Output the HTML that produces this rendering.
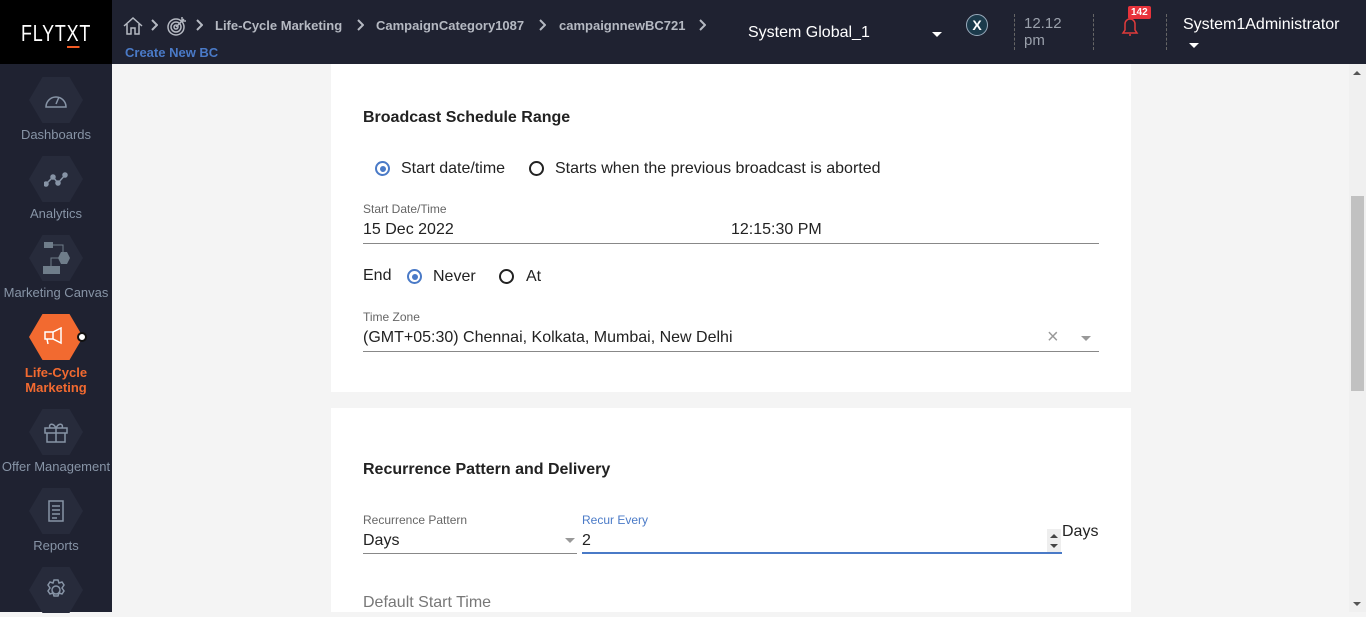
<!DOCTYPE html>
<html><head><meta charset="utf-8"><style>
*{box-sizing:border-box;margin:0;padding:0}
body{width:1366px;height:612px;overflow:hidden;background:#f4f4f4;font-family:"Liberation Sans",sans-serif;position:relative}
.hdr{position:absolute;left:0;top:0;width:1366px;height:64px;background:#1f2231}
.logo{position:absolute;left:0;top:0;width:112px;height:64px;background:#000}
.logo span.w{position:absolute;left:21px;top:20px;color:#fff;font-size:23px;transform:scaleX(0.78);transform-origin:left top;letter-spacing:1px}
.side{position:absolute;left:0;top:64px;width:112px;height:548px;background:#1f2231}
.nav{position:absolute;left:0;width:112px;text-align:center;font-size:13px;color:#8794a6}
.hex{width:54px;height:46px;margin:0 auto 4px;background:#272b3b;clip-path:polygon(25% 0,75% 0,100% 50%,75% 100%,25% 100%,0 50%);display:flex;align-items:center;justify-content:center}
.t{position:absolute;color:#fff;font-size:16px}
.bc{position:absolute;top:18px;color:#b5b9c2;font-size:13px;font-weight:bold;white-space:nowrap}
.chev{position:absolute;top:19px}
.card{position:absolute;left:331px;width:800px;background:#fff}
.h{position:absolute;left:32px;font-size:16px;font-weight:bold;color:#222}
.lbl{position:absolute;font-size:12px;color:#666}
.val{position:absolute;font-size:16px;color:#222}
.line{position:absolute;height:1px;background:#888}
.rad{position:absolute;width:15px;height:15px;border:2px solid #222;border-radius:50%}
.rad.on{border-color:#4a7ac7}
.rad.on:after{content:"";position:absolute;left:2.5px;top:2.5px;width:6px;height:6px;border-radius:50%;background:#4a7ac7}
</style></head><body>
<div class="hdr">
<div class="logo"><span class="w">FLYT<span style="border-bottom:2px solid #f15a24">X</span>T</span></div>
<svg style="position:absolute;left:122px;top:16px" width="22" height="20" viewBox="0 0 22 20" fill="none" stroke="#b5b9c2" stroke-width="1.5"><path d="M2 10L11 2l9 8M5 8v10h4v-6h4v6h4V8"/></svg>
<svg class="chev" style="left:150px" width="8" height="12" viewBox="0 0 8 12" fill="none" stroke="#b5b9c2" stroke-width="2"><path d="M2 1l5 5-5 5"/></svg>
<svg style="position:absolute;left:166px;top:15px" width="22" height="22" viewBox="0 0 22 22" fill="none" stroke="#b5b9c2" stroke-width="1.5"><circle cx="10" cy="12" r="8"/><circle cx="10" cy="12" r="5"/><circle cx="10" cy="12" r="2"/><path d="M10 12l8-8M16 2v4h4"/></svg>
<svg class="chev" style="left:195px" width="8" height="12" viewBox="0 0 8 12" fill="none" stroke="#b5b9c2" stroke-width="2"><path d="M2 1l5 5-5 5"/></svg>
<div class="bc" style="left:215px">Life-Cycle Marketing</div>
<svg class="chev" style="left:356px" width="8" height="12" viewBox="0 0 8 12" fill="none" stroke="#b5b9c2" stroke-width="2"><path d="M2 1l5 5-5 5"/></svg>
<div class="bc" style="left:376px">CampaignCategory1087</div>
<svg class="chev" style="left:538px" width="8" height="12" viewBox="0 0 8 12" fill="none" stroke="#b5b9c2" stroke-width="2"><path d="M2 1l5 5-5 5"/></svg>
<div class="bc" style="left:559px">campaignnewBC721</div>
<svg class="chev" style="left:698px" width="8" height="12" viewBox="0 0 8 12" fill="none" stroke="#b5b9c2" stroke-width="2"><path d="M2 1l5 5-5 5"/></svg>
<div style="position:absolute;left:125px;top:45px;color:#4a7ac7;font-size:13px;font-weight:bold">Create New BC</div>
<div class="t" style="left:748px;top:24px">System Global_1</div>
<div style="position:absolute;left:932px;top:32px;border:5px solid transparent;border-top-color:#fff"></div>
<div style="position:absolute;left:966px;top:14px;width:22px;height:22px;border-radius:50%;background:#1b3a4b;border:1px solid #9ab;color:#fff;font-weight:bold;font-size:14px;text-align:center;line-height:20px">X</div>
<div style="position:absolute;left:1014px;top:14px;height:36px;border-left:1px dashed #666"></div>
<div style="position:absolute;left:1024px;top:15px;color:#9aa0ab;font-size:15px;line-height:17px">12.12<br>pm</div>
<div style="position:absolute;left:1093px;top:14px;height:36px;border-left:1px dashed #666"></div>
<svg style="position:absolute;left:1119px;top:15px" width="22" height="22" viewBox="0 0 22 22" fill="none" stroke="#e03b3b" stroke-width="1.5"><path d="M4 18h14l-2-3V9a5 5 0 0 0-10 0v6zM10 20h2"/></svg>
<div style="position:absolute;left:1128px;top:6px;background:#e8333b;color:#fff;font-size:10px;font-weight:bold;padding:1px 3px;border-radius:2px">142</div>
<div style="position:absolute;left:1166px;top:14px;height:36px;border-left:1px dashed #666"></div>
<div class="t" style="left:1183px;top:16px">System1Administrator</div>
<div style="position:absolute;left:1189px;top:43px;border:5px solid transparent;border-top-color:#fff"></div>
</div>
<div class="side">
<div class="nav" style="top:13px"><div class="hex"><svg width="26" height="22" viewBox="0 0 26 22" fill="none" stroke="#8794a6" stroke-width="1.5"><path d="M3 18a10 10 0 1 1 20 0zM13 15l3-7"/></svg></div>Dashboards</div>
<div class="nav" style="top:92px"><div class="hex"><svg width="24" height="16" viewBox="0 0 24 16" fill="#8794a6" stroke="#8794a6" stroke-width="1.5"><path d="M2 13l7-7 5 6 8-9" fill="none"/><circle cx="2" cy="13" r="2"/><circle cx="9" cy="6" r="2"/><circle cx="14" cy="12" r="2"/><circle cx="21" cy="4" r="2"/></svg></div>Analytics</div>
<div class="nav" style="top:171px"><div class="hex" style="background:#272b3b"><svg width="30" height="36" viewBox="0 0 30 36" fill="#6f7d8a"><rect x="3" y="2" width="9" height="6"/><rect x="2" y="26" width="17" height="8"/><polygon points="20,12 26,12 29,18 26,24 20,24 17,18"/><path d="M12 5h10v7M18 18H10v8" stroke="#6f7d8a" fill="none"/></svg></div>Marketing Canvas</div>
<div class="nav" style="top:250px;color:#f26a30;font-weight:bold;font-size:13px;line-height:15px"><div class="hex" style="background:#f26a30;margin-bottom:5px"><svg width="26" height="20" viewBox="0 0 26 20" fill="none" stroke="#fff" stroke-width="1.5"><path d="M2 5h8l8-4v15l-8-4H2zM10 5v7M4 12l1 5"/></svg></div>Life-Cycle<br>Marketing</div>
<div style="position:absolute;left:77px;top:268px;width:10px;height:10px;border-radius:50%;background:#fff;border:2px solid #111"></div>
<div class="nav" style="top:345px"><div class="hex"><svg width="26" height="24" viewBox="0 0 26 24" fill="none" stroke="#8794a6" stroke-width="1.5"><path d="M2 8h22v5H2zM4 13v9h18v-9M13 8v14M13 8c-3-6-8-4-6 0M13 8c3-6 8-4 6 0"/></svg></div>Offer Management</div>
<div class="nav" style="top:424px"><div class="hex"><svg width="18" height="22" viewBox="0 0 18 22" fill="none" stroke="#8794a6" stroke-width="1.5"><path d="M2 1h14v20H2zM5 6h8M5 10h8M5 14h8M5 18h5"/></svg></div>Reports</div>
<div class="nav" style="top:503px"><div class="hex"><svg width="24" height="24" viewBox="0 0 24 24" fill="none" stroke="#8794a6" stroke-width="1.5"><circle cx="12" cy="12" r="4"/><path d="M10 2h4l1 3 3-1 2 3-2 3 2 3-2 3-3-1-1 3h-4l-1-3-3 1-2-3 2-3-2-3 2-3 3 1z"/></svg></div></div>
</div>
<div class="card" style="top:64px;height:328px">
<div class="h" style="top:45px">Broadcast Schedule Range</div>
<div class="rad on" style="left:44px;top:97px"></div><div class="val" style="left:70px;top:96px">Start date/time</div>
<div class="rad" style="left:198px;top:97px"></div><div class="val" style="left:224px;top:96px">Starts when the previous broadcast is aborted</div>
<div class="lbl" style="left:32px;top:138px">Start Date/Time</div>
<div class="val" style="left:32px;top:157px">15 Dec 2022</div>
<div class="val" style="left:400px;top:157px">12:15:30 PM</div>
<div class="line" style="left:32px;top:179px;width:736px"></div>
<div class="val" style="left:32px;top:203px">End</div>
<div class="rad on" style="left:76px;top:205px"></div><div class="val" style="left:102px;top:204px">Never</div>
<div class="rad" style="left:168px;top:205px"></div><div class="val" style="left:195px;top:204px">At</div>
<div class="lbl" style="left:32px;top:246px">Time Zone</div>
<div class="val" style="left:32px;top:265px">(GMT+05:30) Chennai, Kolkata, Mumbai, New Delhi</div>
<div style="position:absolute;left:716px;top:262px;color:#999;font-size:20px">×</div>
<div style="position:absolute;left:750px;top:272px;border:5px solid transparent;border-top-color:#999"></div>
<div class="line" style="left:32px;top:287px;width:736px"></div>
</div>
<div class="card" style="top:408px;height:204px">
<div class="h" style="top:53px">Recurrence Pattern and Delivery</div>
<div class="lbl" style="left:32px;top:105px">Recurrence Pattern</div>
<div class="val" style="left:32px;top:124px">Days</div>
<div style="position:absolute;left:234px;top:130px;border:5px solid transparent;border-top-color:#999"></div>
<div class="line" style="left:32px;top:145px;width:214px"></div>
<div class="lbl" style="left:251px;top:105px;color:#4a7ac7">Recur Every</div>
<div class="val" style="left:251px;top:124px">2</div>
<div style="position:absolute;left:716px;top:121px;width:14px;height:23px;background:#eee"></div>
<div style="position:absolute;left:719px;top:122px;border:4px solid transparent;border-bottom-color:#444"></div>
<div style="position:absolute;left:719px;top:136px;border:4px solid transparent;border-top-color:#444"></div>
<div style="position:absolute;left:251px;top:144px;width:480px;height:2px;background:#4a7ac7"></div>
<div class="val" style="left:731px;top:115px">Days</div>
<div class="val" style="left:32px;top:186px;color:#777">Default Start Time</div>
</div>
<div style="position:absolute;left:1349px;top:64px;width:17px;height:548px;background:#f0f0f0"></div>
<div style="position:absolute;left:1351px;top:196px;width:13px;height:195px;background:#c1c1c1"></div>
<div style="position:absolute;left:1353px;top:67px;border:4px solid transparent;border-bottom-color:#555"></div>
<div style="position:absolute;left:1353px;top:602px;border:4px solid transparent;border-top-color:#555"></div>
</body></html>
